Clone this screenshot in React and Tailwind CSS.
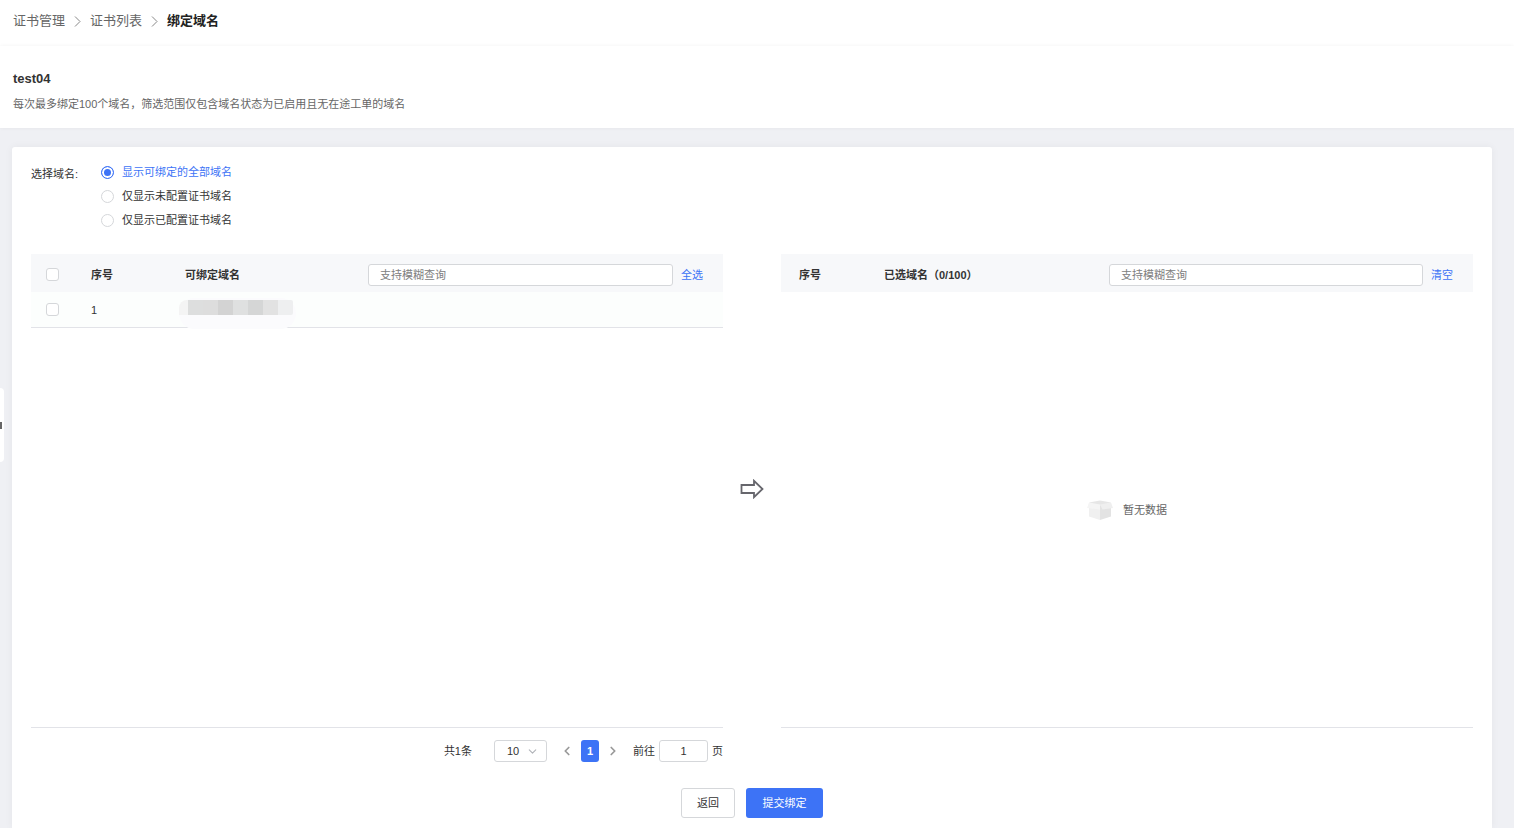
import React, { useState } from "react";
import { ChevronDown, ChevronLeft, ChevronRight } from "lucide-react";

const filters = [
  { value: "all", label: "显示可绑定的全部域名" },
  { value: "unset", label: "仅显示未配置证书域名" },
  { value: "set", label: "仅显示已配置证书域名" },
];

const mosaic = [
  "bg-[#dddede]",
  "bg-[#dddddd]",
  "bg-[#d3d3d3]",
  "bg-[#dfe0e0]",
  "bg-[#d5d6d6]",
  "bg-[#e2e2e2]",
  "bg-[#eeeff0] rounded-r-xs",
];

const checkboxClass =
  "block h-[13px] w-[13px] appearance-none rounded-[3px] border border-[#d5d7da] bg-white checked:border-[#3d73f6] checked:bg-[#3d73f6]";

const searchClass =
  "h-[22px] min-w-0 flex-1 rounded-[3px] border border-[#d5d7da] bg-white px-[11px] font-normal text-[#333] placeholder:text-[#808080] focus:outline-none";

const Separator = () => (
  <svg width="13" height="13" viewBox="0 0 13 13" fill="none" className="mx-[6px]" aria-hidden="true">
    <path d="M4 1.500 9 6.500l-5 5" stroke="#888" />
  </svg>
);

const Breadcrumb = () => (
  <nav
    aria-label="breadcrumb"
    className="flex h-[46px] items-center bg-white px-[13px] pb-1 text-[13px] text-[#666]"
  >
    <a href="#manage">证书管理</a>
    <Separator />
    <a href="#list">证书列表</a>
    <Separator />
    <span className="font-bold text-[#222]">绑定域名</span>
  </nav>
);

const EmptyBox = () => (
  <svg width="26" height="20" viewBox="0 0 26 20" aria-hidden="true">
    <path d="M2 2.500 13 .5l11 2-11 4z" fill="#e6e6e6" />
    <path d="M2 4 13 6v14L2 16.500z" fill="#f0f0f0" />
    <path d="M24 4 13 6v14l11-3.500z" fill="#e3e3e3" />
    <path d="M2 2.500 13 4.500v5L0 8z" fill="#f5f5f5" />
    <path d="M24 2.500 13 4.500 15.500 9.500 26 8z" fill="#efefef" />
  </svg>
);

const AvailableTable = () => {
  const [search, setSearch] = useState("");
  const [checked, setChecked] = useState(false);

  return (
    <div className="h-[474px] border-b border-[#e2e3e8]">
      <table className="w-full table-fixed text-left">
        <thead className="bg-[#f7f8fa]">
          <tr className="h-[38px]">
            <th className="w-[60px] pt-[3px] pl-[15px]">
              <input
                type="checkbox"
                aria-label="全选"
                className={checkboxClass}
                checked={checked}
                onChange={(e) => setChecked(e.target.checked)}
              />
            </th>
            <th className="w-[94px] pt-[3px]">序号</th>
            <th className="pt-[3px] pr-5">
              <div className="flex items-center">
                <span className="w-[183px] shrink-0">可绑定域名</span>
                <input
                  type="text"
                  aria-label="可绑定域名"
                  placeholder="支持模糊查询"
                  className={searchClass}
                  value={search}
                  onChange={(e) => setSearch(e.target.value)}
                />
                <button
                  type="button"
                  className="ml-2 font-normal text-[#3d73f6]"
                  onClick={() => setChecked(true)}
                >
                  全选
                </button>
              </div>
            </th>
          </tr>
        </thead>
        <tbody>
          <tr className="h-[35px] bg-[#fcfefd] shadow-[0_1px_0_#e2e3e8]">
            <td className="pl-[15px]">
              <input
                type="checkbox"
                aria-label="1"
                className={checkboxClass}
                checked={checked}
                onChange={(e) => setChecked(e.target.checked)}
              />
            </td>
            <td>1</td>
            <td className="py-0 align-top">
              <div className="mt-[6px] -mb-2 -ml-[6px] flex h-[31px] w-[117px] items-start rounded-2xl bg-[#fbfbfd] pt-[2px]">
                <span className="h-[15px] w-[9px] rounded-tl-lg bg-[#f4f4f4]"></span>
                {mosaic.map((color, i) => (
                  <span key={i} className={`h-[15px] w-[15px] ${color}`}></span>
                ))}
              </div>
            </td>
          </tr>
        </tbody>
      </table>
    </div>
  );
};

const SelectedTable = () => {
  const [search, setSearch] = useState("");

  return (
    <div className="flex h-[474px] min-w-0 flex-1 flex-col border-b border-[#e2e3e8]">
      <table className="w-full table-fixed text-left">
        <thead className="bg-[#f7f8fa]">
          <tr className="h-[38px]">
            <th className="w-[103px] pt-[3px] pl-[18px]">序号</th>
            <th className="pt-[3px] pr-5">
              <div className="flex items-center">
                <span className="w-[225px] shrink-0">已选域名（0/100）</span>
                <input
                  type="text"
                  aria-label="已选域名"
                  placeholder="支持模糊查询"
                  className={searchClass}
                  value={search}
                  onChange={(e) => setSearch(e.target.value)}
                />
                <button
                  type="button"
                  className="ml-2 font-normal text-[#3d73f6]"
                  onClick={() => setSearch("")}
                >
                  清空
                </button>
              </div>
            </th>
          </tr>
        </thead>
      </table>
      <div className="flex flex-1 items-center justify-center gap-[10px] text-[#666]">
        <EmptyBox />
        <span>暂无数据</span>
      </div>
    </div>
  );
};

const Pagination = () => {
  const [page, setPage] = useState("1");

  return (
    <div className="mt-3 flex h-[22px] items-center justify-end">
      <span className="mr-[22px]">共1条</span>
      <div className="relative">
        <select
          aria-label="每页条数"
          className="block h-[22px] w-[53px] appearance-none rounded-[3px] border border-[#d5d7da] bg-white pl-3 focus:outline-none"
        >
          <option>10</option>
          <option>20</option>
          <option>50</option>
        </select>
        <ChevronDown
          size={13}
          strokeWidth={2}
          className="pointer-events-none absolute top-[5px] right-2 text-[#b0b3b8]"
        />
      </div>
      <button type="button" aria-label="上一页" className="ml-[13px] text-[#999]">
        <ChevronLeft size={14} strokeWidth={3} />
      </button>
      <button
        type="button"
        className="mx-[7px] h-[22px] w-[18px] rounded-[3px] bg-[#3d73f6] font-bold text-white"
      >
        1
      </button>
      <button type="button" aria-label="下一页" className="text-[#999]">
        <ChevronRight size={14} strokeWidth={3} />
      </button>
      <label className="ml-[13px] flex items-center gap-1">
        前往
        <input
          type="text"
          className="h-[22px] w-[49px] rounded-[3px] border border-[#d5d7da] bg-white text-center focus:outline-none"
          value={page}
          onChange={(e) => setPage(e.target.value)}
        />
        页
      </label>
    </div>
  );
};

const App = () => {
  const [filter, setFilter] = useState("all");

  return (
    <div className="relative flex min-h-screen flex-col bg-[#eff0f4] font-['Liberation_Sans','Noto_Sans_CJK_SC',sans-serif] text-[11px] leading-4 text-[#333]">
      <Breadcrumb />
      <header className="h-[82px] bg-white px-[13px] pt-[23px] shadow-[0_0_4px_rgba(0,0,0,0.05)]">
        <h1 className="text-[13px] leading-5 font-bold">test04</h1>
        <p className="mt-[7px] text-[#666]">
          每次最多绑定100个域名，筛选范围仅包含域名状态为已启用且无在途工单的域名
        </p>
      </header>

      <button
        type="button"
        aria-label="展开"
        className="absolute top-[388px] left-0 flex h-[74px] w-1 items-center rounded-r-full bg-white"
      >
        <span className="h-[7px] w-[2px] bg-[#666]"></span>
      </button>

      <main className="mt-[19px] mr-[22px] ml-3 flex-1 rounded-t-[3px] bg-white px-[19px] pt-[13px] pb-[10px] shadow-[0_0_8px_rgba(0,0,0,0.05)]">
        <fieldset className="flex">
          <legend className="float-left w-[70px] pt-[6px]">选择域名:</legend>
          <div>
            {filters.map((item) => (
              <label
                key={item.value}
                className="flex h-6 items-center gap-2 has-checked:text-[#3d73f6]"
              >
                <input
                  type="radio"
                  name="filter"
                  className="h-[13px] w-[13px] appearance-none rounded-full border border-[#d5d7da] bg-white checked:border-[#3d73f6] checked:bg-[#3d73f6] checked:shadow-[inset_0_0_0_2px_#fff]"
                  checked={filter === item.value}
                  onChange={() => setFilter(item.value)}
                />
                {item.label}
              </label>
            ))}
          </div>
        </fieldset>

        <div className="mt-[22px] flex">
          <div className="min-w-0 flex-1">
            <AvailableTable />
            <Pagination />
          </div>
          <div className="flex h-[470px] w-[58px] items-center justify-center">
            <svg width="24" height="20" viewBox="0 0 24 20" fill="none" aria-hidden="true">
              <path
                d="M1.500 6h12.500V1.800L22.500 10 14 18.200V14h-12.500z"
                stroke="#66666c"
                strokeWidth="1.800"
              />
            </svg>
          </div>
          <SelectedTable />
        </div>

        <div className="mt-[26px] flex justify-center gap-[11px]">
          <button
            type="button"
            className="h-[30px] w-[54px] rounded-[3px] border border-[#d5d7da] bg-white"
          >
            返回
          </button>
          <button type="button" className="h-[30px] w-[77px] rounded-[3px] bg-[#3d73f6] text-white">
            提交绑定
          </button>
        </div>
      </main>
    </div>
  );
};

export default App;
